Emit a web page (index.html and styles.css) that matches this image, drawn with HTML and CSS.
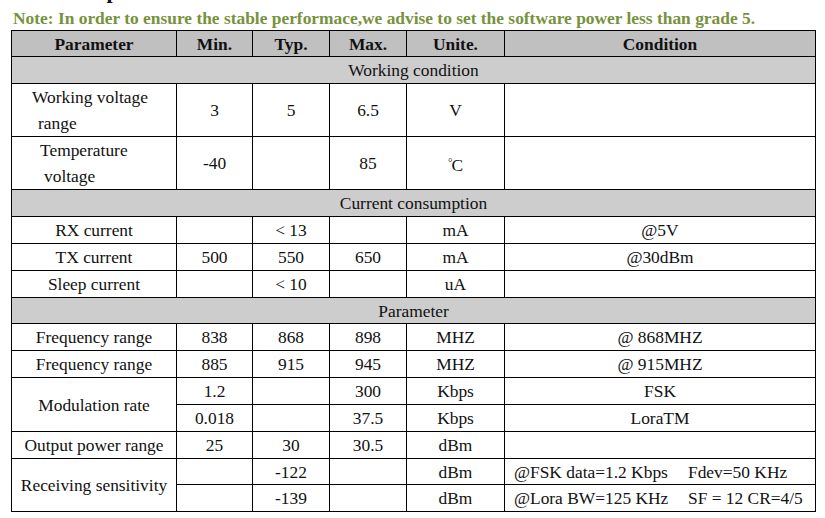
FILE: index.html
```html
<!DOCTYPE html>
<html>
<head>
<meta charset="utf-8">
<link rel="stylesheet" href="styles.css">
</head>
<body>
<div class="title">2.3 Main parameters</div>
<div class="note">Note: In order to ensure the stable performace,we advise to set the software power less than grade 5.</div>
<table class="spec">
  <colgroup>
    <col class="c1"><col class="c2"><col class="c3"><col class="c4"><col class="c5"><col class="c6">
  </colgroup>
  <tr class="head h26"><td>Parameter</td><td>Min.</td><td>Typ.</td><td>Max.</td><td>Unite.</td><td>Condition</td></tr>
  <tr class="section h27"><td colspan="6">Working condition</td></tr>
  <tr class="h52"><td class="multi"><span class="l wv1">Working voltage</span><span class="l wv2">range</span></td><td>3</td><td>5</td><td>6.5</td><td>V</td><td></td></tr>
  <tr class="h53"><td class="multi"><span class="l tv1">Temperature</span><span class="l tv2">voltage</span></td><td>-40</td><td></td><td>85</td><td><span class="deg">°</span>C</td><td></td></tr>
  <tr class="section h27"><td colspan="6">Current consumption</td></tr>
  <tr class="h27"><td>RX current</td><td></td><td>&lt; 13</td><td></td><td>mA</td><td>@5V</td></tr>
  <tr class="h27"><td>TX current</td><td>500</td><td>550</td><td>650</td><td>mA</td><td>@30dBm</td></tr>
  <tr class="h27"><td>Sleep current</td><td></td><td>&lt; 10</td><td></td><td>uA</td><td></td></tr>
  <tr class="section h26"><td colspan="6">Parameter</td></tr>
  <tr class="h27"><td>Frequency range</td><td>838</td><td>868</td><td>898</td><td>MHZ</td><td>@ 868MHZ</td></tr>
  <tr class="h27"><td>Frequency range</td><td>885</td><td>915</td><td>945</td><td>MHZ</td><td>@ 915MHZ</td></tr>
  <tr class="h27"><td rowspan="2">Modulation rate</td><td>1.2</td><td></td><td>300</td><td>Kbps</td><td>FSK</td></tr>
  <tr class="h27"><td>0.018</td><td></td><td>37.5</td><td>Kbps</td><td>LoraTM</td></tr>
  <tr class="h27"><td>Output power range</td><td>25</td><td>30</td><td>30.5</td><td>dBm</td><td></td></tr>
  <tr class="h26"><td rowspan="2">Receiving sensitivity</td><td></td><td>-122</td><td></td><td>dBm</td><td class="cond"><span class="tab">@FSK data=1.2 Kbps</span>Fdev=50 KHz</td></tr>
  <tr class="h27"><td></td><td>-139</td><td></td><td>dBm</td><td class="cond"><span class="tab">@Lora BW=125 KHz</span>SF = 12 CR=4/5</td></tr>
</table>
</body>
</html>
```
FILE: styles.css
```css
html, body {
  margin: 0;
  padding: 0;
  background: #ffffff;
}
body {
  font-family: "Liberation Serif", "Noto Sans CJK SC", serif;
  color: #111111;
  overflow: hidden;
}
.title {
  font-weight: bold;
  font-size: 22px;
  line-height: 22px;
  height: 22px;
  margin-top: -20px;
  padding-left: 18px;
  white-space: nowrap;
}
.note {
  margin-top: 6px;
  height: 20px;
  line-height: 20px;
  font-size: 17.4px;
  font-weight: bold;
  color: #76923c;
  padding-left: 13px;
  white-space: nowrap;
}
.spec {
  margin-top: 2px;
  margin-left: 11px;
  border-collapse: collapse;
  table-layout: fixed;
  width: 804px;
  font-size: 17.4px;
}
.c1 { width: 165px; }
.c2 { width: 76px; }
.c3 { width: 77px; }
.c4 { width: 77px; }
.c5 { width: 98px; }
.c6 { width: 311px; }
.spec td {
  border: 1px solid #000000;
  padding: 0;
  text-align: center;
  vertical-align: middle;
  line-height: 20px;
  white-space: nowrap;
}
.h26 td { height: 25px; }
.h27 td { height: 26px; }
.h52 td { height: 51px; }
.h53 td { height: 52px; }
.head td {
  background: #c0c0c0;
  font-weight: bold;
}
.section td {
  background: #cdcdcd;
}
.spec td.multi {
  text-align: left;
  line-height: 26px;
}
.l { display: block; }
.wv1 { padding-left: 20px; }
.wv2 { padding-left: 26px; }
.tv1 { padding-left: 28px; }
.tv2 { padding-left: 32px; }
.deg {
  font-size: 11px;
  vertical-align: 5px;
  margin-right: -1px;
}
.spec td.cond {
  text-align: left;
  padding-left: 9px;
}
.tab {
  display: inline-block;
  width: 174px;
}
```
